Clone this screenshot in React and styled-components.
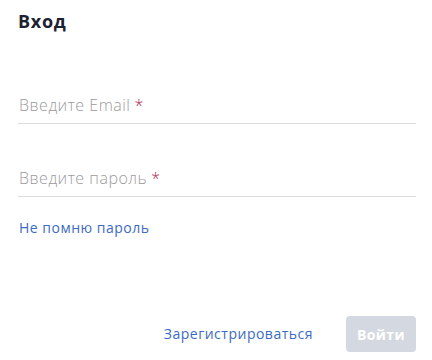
import React from 'react'
import styled, { createGlobalStyle } from 'styled-components'

const Global = createGlobalStyle`
  html, body { margin: 0; padding: 0; background: #fff; }
  * { box-sizing: border-box; }
  body { font-family: "Open Sans", "Noto Sans", sans-serif; }
`

const Page = styled.div`
  height: 360px;
  display: flex;
  flex-direction: column;
  padding: 9px 16px 8px 18px;
`

const Title = styled.h1`
  margin: 0;
  font-size: 18px;
  line-height: 24px;
  font-weight: 700;
  letter-spacing: 0.7px;
  color: #1d2231;
`

const Form = styled.div`
  display: flex;
  flex-direction: column;
  gap: 42px;
  margin-top: 60px;
`

const Field = styled.label`
  display: block;
  padding: 0 0 6px 1px;
  border-bottom: 1px solid #dcdcdc;
  font-size: 16px;
  line-height: 24px;
  font-weight: 300;
  letter-spacing: 0.5px;
  color: #9b9b9b;
  cursor: text;
`

const Star = styled.span`
  color: #b0284f;
  margin-left: 4px;
`

const Link = styled.a`
  display: inline-block;
  font-size: 14px;
  line-height: 20px;
  letter-spacing: 0.5px;
  color: #3c6bc1;
  text-decoration: none;
  margin-top: ${p => p.$top || 0}px;
  padding-left: 1px;
  cursor: pointer;
`

const Footer = styled.div`
  margin-top: auto;
  display: flex;
  justify-content: flex-end;
  align-items: center;
  gap: 33px;
`

const Submit = styled.button`
  width: 70px;
  height: 36px;
  border: none;
  border-radius: 4px;
  background: #d4d8e0;
  color: #fff;
  font-family: inherit;
  font-size: 14px;
  font-weight: 700;
  letter-spacing: 0.4px;
`

export default function App() {
  return (
    <Page>
      <Global />
      <Title>Вход</Title>
      <Form>
        <Field>Введите Email<Star>*</Star></Field>
        <Field>Введите пароль<Star>*</Star></Field>
      </Form>
      <div>
        <Link $top={21}>Не помню пароль</Link>
      </div>
      <Footer>
        <Link>Зарегистрироваться</Link>
        <Submit disabled>Войти</Submit>
      </Footer>
    </Page>
  )
}
